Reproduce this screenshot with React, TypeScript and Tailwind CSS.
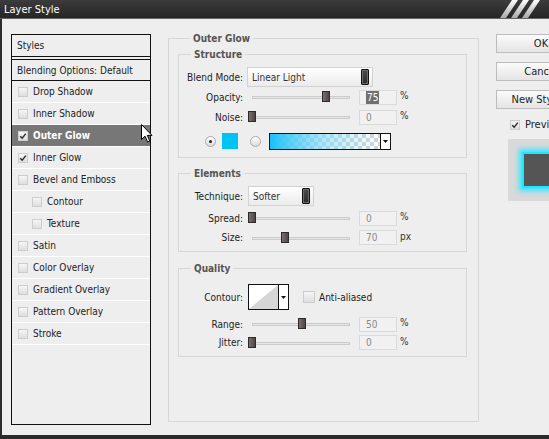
import React from "react";

const sans = "font-['DejaVu_Sans_Condensed','Liberation_Sans',sans-serif]";

const styleItems = [
  { label: "Drop Shadow" },
  { label: "Inner Shadow" },
  { label: "Outer Glow", checked: true, active: true },
  { label: "Inner Glow", checked: true },
  { label: "Bevel and Emboss" },
  { label: "Contour", indent: true },
  { label: "Texture", indent: true },
  { label: "Satin" },
  { label: "Color Overlay" },
  { label: "Gradient Overlay" },
  { label: "Pattern Overlay" },
  { label: "Stroke" },
];

function Check({ checked, size = "h-[10px] w-[10px]" }: { checked?: boolean; size?: string }) {
  return (
    <span className={`flex shrink-0 items-center justify-center border border-[#cdcdcd] bg-gradient-to-b from-[#f6f6f6] to-[#dedede] ${size}`}>
      {checked && (
        <svg width="8" height="8" viewBox="0 0 8 8">
          <path d="M1.2 4.2 L3.2 6.2 L6.8 1.6" fill="none" stroke="#2a2a2a" strokeWidth="1.4" />
        </svg>
      )}
    </span>
  );
}

function Radio({ on }: { on?: boolean }) {
  return (
    <span className="flex h-[11px] w-[11px] shrink-0 items-center justify-center rounded-full border border-[#a9a9a9] bg-gradient-to-b from-[#ffffff] to-[#dcdcdc]">
      {on && <span className="h-[3px] w-[3px] rounded-full bg-[#222]" />}
    </span>
  );
}

function DownArrow() {
  return (
    <svg width="5" height="3" viewBox="0 0 5 3">
      <polygon points="0,0 5,0 2.5,3" fill="#111" />
    </svg>
  );
}

function StyleRow({ label, checked, active, indent }: { label: string; checked?: boolean; active?: boolean; indent?: boolean }) {
  return (
    <div
      className={`flex h-[22px] items-center gap-[5px] border-b border-white ${indent ? "pl-[20px]" : "pl-[6px]"} ${
        active ? "bg-[#777777] font-bold text-white" : "text-[#222]"
      }`}
    >
      <Check checked={checked} />
      <span>{label}</span>
    </div>
  );
}

function Dropdown({ value, width }: { value: string; width: string }) {
  return (
    <div className={`flex h-[20px] items-center justify-between border border-[#d2d2d2] bg-gradient-to-b from-[#ffffff] to-[#ebebeb] pl-[4px] pr-[3px] text-[#333] ${width}`}>
      <span>{value}</span>
      <span className="h-[16px] w-[8px] rounded-[1px] border border-[#111] bg-gradient-to-b from-[#4a4a4a] to-[#2c2c2c] shadow-[inset_0_0_0_1px_#6a6a6a]" />
    </div>
  );
}

function Slider({ pct }: { pct: number }) {
  return (
    <div className="relative h-[12px] w-[107px] shrink-0">
      <div className="absolute left-[4px] right-[5px] top-[5px] h-[3px] border border-[#cbcbcb] bg-[#e6e6e6]" />
      <div
        className="absolute top-0 h-[11px] w-[8px] border border-[#2e2a2a] bg-gradient-to-r from-[#7a7070] to-[#4e4646]"
        style={{ left: Math.round(pct * 99) }}
      />
    </div>
  );
}

function SliderRow({
  label,
  pct,
  value,
  unit,
  selected,
  h,
}: {
  label: string;
  pct: number;
  value: string;
  unit: string;
  selected?: boolean;
  h: string;
}) {
  return (
    <div className={`flex items-center ${h}`}>
      <span className="w-[64px] shrink-0 text-right text-[#222]">{label}</span>
      <span className="ml-[5px]">
        <Slider pct={pct} />
      </span>
      <span className="ml-[4px] flex h-[15px] w-[38px] items-center border border-[#dadada] bg-[#f1f1f1] pl-[6px] text-[#8a8a8a]">
        <span className={selected ? "bg-[#707070] px-[1px] text-white" : ""}>{value}</span>
      </span>
      <span className="ml-[3px] -mt-[3px] text-[#333]">{unit}</span>
    </div>
  );
}

function Group({ title, className, children }: { title: string; className?: string; children: React.ReactNode }) {
  return (
    <fieldset className={`border border-[#d7d7d7] ${className ?? ""}`}>
      <legend className="ml-[12px] px-[3px] text-[10px] font-bold leading-[13px] text-[#555]">{title}</legend>
      {children}
    </fieldset>
  );
}

function Button({ label }: { label: string }) {
  return (
    <div className="flex h-[19px] w-[90px] shrink-0 items-center justify-center border border-[#bcbcbc] bg-gradient-to-b from-[#fbfbfb] to-[#e4e4e4] text-[11px] text-[#222]">
      {label}
    </div>
  );
}

export default function App() {
  return (
    <div className={`relative flex h-[439px] w-[549px] flex-col overflow-hidden bg-[#eeeeee] text-[10px] leading-[13px] ${sans}`}>
      {/* title bar */}
      <div className="flex h-[19px] shrink-0 items-center justify-between border-b border-[#666] bg-gradient-to-b from-[#3c3c3c] via-[#303030] to-[#262626] pl-[4px] pr-[9px]">
        <span className="text-[11px] text-white">Layer Style</span>
        <svg width="40" height="18" viewBox="0 0 40 18">
          <defs>
            <linearGradient id="stripe" x1="0" y1="0" x2="0" y2="1">
              <stop offset="0" stopColor="#ffffff" />
              <stop offset="1" stopColor="#a8a8a8" />
            </linearGradient>
          </defs>
          {[0, 11, 22].map((x) => (
            <polygon key={x} points={`${x},18 ${x + 6},18 ${x + 18},0 ${x + 12},0`} fill="url(#stripe)" />
          ))}
        </svg>
      </div>

      <div className="flex flex-1 border-b-[4px] border-l-2 border-[#2b2b2b]">
        {/* styles list */}
        <div className="ml-[9px] mt-[15px] h-[391px] w-[140px] shrink-0 border border-[#111] text-[#222]">
          <div className="flex h-[22px] items-center border-b border-[#111] pl-[5px]">Styles</div>
          <div className="mt-[2px] flex h-[22px] items-center border-y border-[#111] pl-[5px]">Blending Options: Default</div>
          {styleItems.map((it) => (
            <StyleRow key={it.label} {...it} />
          ))}
        </div>

        {/* outer glow settings */}
        <Group title="Outer Glow" className="ml-[17px] mt-[13px] h-[390px] w-[311px] shrink-0 pl-[9px] pr-[11px]">
          <Group title="Structure" className="mt-[3px] pb-[6px]">
            <div className="mt-[6px] flex h-[20px] items-center">
              <span className="w-[64px] shrink-0 text-right text-[#222]">Blend Mode:</span>
              <span className="ml-[4px]">
                <Dropdown value="Linear Light" width="w-[126px]" />
              </span>
            </div>
            <SliderRow label="Opacity:" pct={0.75} value="75" unit="%" selected h="h-[20px]" />
            <SliderRow label="Noise:" pct={0} value="0" unit="%" h="h-[20px]" />
            <div className="mt-[4px] flex h-[20px] items-center pl-[26px]">
              <Radio on />
              <span className="ml-[6px] h-[16px] w-[16px] bg-[#00c3f5]" />
              <span className="ml-[12px]">
                <Radio />
              </span>
              <div className="ml-[8px] flex h-[17px] border border-[#111]">
                <div className="h-full w-[110px] bg-[repeating-conic-gradient(#d4d4d4_0_25%,#ffffff_0_50%)] bg-[length:8px_8px]">
                  <div className="h-full w-full bg-gradient-to-r from-[#13c3f7] via-[#7cdcf9]/60 to-transparent" />
                </div>
                <div className="flex w-[10px] items-center justify-center border-l border-[#111] bg-white">
                  <DownArrow />
                </div>
              </div>
            </div>
          </Group>

          <Group title="Elements" className="mt-[9px] pb-[4px]">
            <div className="mt-[6px] flex h-[20px] items-center">
              <span className="w-[64px] shrink-0 text-right text-[#222]">Technique:</span>
              <span className="ml-[5px]">
                <Dropdown value="Softer" width="w-[66px]" />
              </span>
            </div>
            <SliderRow label="Spread:" pct={0} value="0" unit="%" h="mt-[2px] h-[20px]" />
            <SliderRow label="Size:" pct={0.334} value="70" unit="px" h="h-[19px]" />
          </Group>

          <Group title="Quality" className="mt-[10px] pb-[5px]">
            <div className="mt-[9px] flex h-[26px] items-center">
              <span className="w-[64px] shrink-0 text-right text-[#222]">Contour:</span>
              <div className="ml-[5px] flex h-[26px] border border-[#111]">
                <svg width="29" height="24" viewBox="0 0 29 24" className="bg-white">
                  <polygon points="0,24 29,0 29,24" fill="#d6d6d6" />
                </svg>
                <div className="flex w-[10px] items-center justify-center border-l border-[#111] bg-white">
                  <DownArrow />
                </div>
              </div>
              <span className="ml-[14px]">
                <Check size="h-[12px] w-[12px]" />
              </span>
              <span className="ml-[4px] text-[#222]">Anti-aliased</span>
            </div>
            <SliderRow label="Range:" pct={0.5} value="50" unit="%" h="mt-[4px] h-[20px]" />
            <SliderRow label="Jitter:" pct={0} value="0" unit="%" h="h-[17px]" />
          </Group>
        </Group>

        {/* buttons and preview */}
        <div className="ml-[17px] mt-[15px] flex flex-col">
          <Button label="OK" />
          <div className="mt-[9px]">
            <Button label="Cancel" />
          </div>
          <div className="mt-[9px]">
            <Button label="New Style..." />
          </div>
          <div className="ml-[14px] mt-[9px] flex items-center gap-[5px] text-[#222]">
            <Check checked />
            <span className="text-[11px]">Preview</span>
          </div>
          <div className="ml-[12px] mt-[8px] flex h-[62px] w-[60px] items-center bg-[#d9d9d9] pl-[14px]">
            <div className="h-[36px] w-[40px] border-2 border-[#1ee6ff] bg-[#555] shadow-[0_0_5px_3px_#38e6ff]" />
          </div>
        </div>
      </div>

      {/* mouse pointer */}
      <svg className="absolute left-[141px] top-[124px]" width="12" height="19" viewBox="0 0 12 19">
        <path d="M0.5 0.5 L0.5 15.5 L4 12.2 L6.6 18 L8.8 17 L6.3 11.4 L11 11.4 Z" fill="#fff" stroke="#000" strokeWidth="1" />
      </svg>
    </div>
  );
}
